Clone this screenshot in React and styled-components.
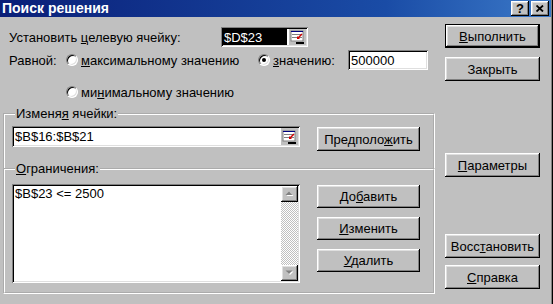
import React from "react"
import styled, { createGlobalStyle, css } from "styled-components"

const GlobalStyle = createGlobalStyle`
  html, body {
    margin: 0;
    padding: 0;
    background: #c0c0c0;
  }
  body {
    font-family: "Liberation Sans", Arial, sans-serif;
    font-size: 13px;
    color: #000;
  }
`

const raised = css`
  box-shadow: inset -1px -1px #000, inset 1px 1px #fff, inset -2px -2px #808080,
    inset 2px 2px #dfdfdf;
`

const sunken = css`
  box-shadow: inset 1px 1px #808080, inset -1px -1px #fff, inset 2px 2px #000,
    inset -2px -2px #dfdfdf;
`

const Window = styled.div`
  width: 553px;
  height: 304px;
  box-sizing: border-box;
  background: #c0c0c0;
  box-shadow: inset -1px 0 #000, inset -2px 0 #808080;
  overflow: hidden;
`

const TitleBar = styled.div`
  width: 551px;
  height: 17px;
  box-sizing: border-box;
  padding: 0 2px 0 2px;
  display: flex;
  align-items: center;
  background: linear-gradient(90deg, #0a1f78 0%, #1a4ca6 70%, #3b79c8 100%);
`

const Title = styled.div`
  flex: 1;
  color: #fff;
  font-weight: bold;
  font-size: 14px;
  line-height: 17px;
  white-space: nowrap;
`

const CaptionButton = styled.div`
  width: 18px;
  height: 15px;
  box-sizing: border-box;
  margin-left: ${p => p.$gap || 0}px;
  background: #c0c0c0;
  ${raised};
  display: flex;
  align-items: center;
  justify-content: center;
  font-weight: bold;
  font-size: 13px;
  line-height: 13px;
`

const Body = styled.div`
  display: flex;
`

const LeftCol = styled.div`
  width: 436px;
  display: flex;
  flex-direction: column;
`

const RightCol = styled.div`
  width: 95px;
  margin-left: 9px;
  display: flex;
  flex-direction: column;
`

const Row = styled.div`
  display: flex;
  align-items: center;
  height: ${p => p.$h || 20}px;
  margin-top: ${p => p.$top || 0}px;
  padding-left: ${p => p.$indent || 9}px;
`

const Label = styled.div`
  width: ${p => (p.$w ? `${p.$w}px` : "auto")};
  white-space: nowrap;
  flex-shrink: 0;
`

const Field = styled.div`
  box-sizing: border-box;
  width: ${p => p.$w}px;
  height: ${p => p.$h}px;
  padding: 2px;
  background: #fff;
  ${sunken};
  display: flex;
  align-items: center;
  flex-shrink: 0;
`

const FieldText = styled.div`
  flex: 1;
  height: 100%;
  display: flex;
  align-items: center;
  padding-left: 1px;
  white-space: nowrap;
  ${p =>
    p.$selected &&
    css`
      background: #000;
      color: #fff;
    `}
`

const RefIcon = styled.div`
  width: 17px;
  height: 100%;
  margin-left: 2px;
  display: flex;
  align-items: center;
  justify-content: center;
  background: #c0c0c0;
`

const RadioOption = styled.label`
  display: flex;
  align-items: center;
  width: ${p => (p.$w ? `${p.$w}px` : "auto")};
  flex-shrink: 0;
  white-space: nowrap;
`

const RadioCircle = styled.span`
  width: 12px;
  height: 12px;
  box-sizing: border-box;
  border-radius: 50%;
  background: #fff;
  border: 1px solid;
  border-color: #808080 #fff #fff #808080;
  box-shadow: inset 1px 1px #000, inset -1px -1px #dfdfdf;
  margin-right: 3px;
  display: flex;
  align-items: center;
  justify-content: center;

  &::after {
    content: "";
    width: 4px;
    height: 4px;
    border-radius: 50%;
    background: ${p => (p.$checked ? "#000" : "transparent")};
  }
`

const Group = styled.fieldset`
  box-sizing: border-box;
  width: 432px;
  margin: ${p => p.$top || 0}px 0 0 3px;
  padding: ${p => p.$pad};
  border: 2px groove #ffffff;
  ${p =>
    p.$open &&
    css`
      border-bottom: none;
    `}
  min-width: 0;
`

const Legend = styled.legend`
  margin-left: 3px;
  padding: 0 1px;
  line-height: 15px;
  white-space: nowrap;
`

const GroupRow = styled.div`
  display: flex;
  align-items: flex-start;
`

const ButtonStack = styled.div`
  display: flex;
  flex-direction: column;
  gap: 9px;
  margin-left: 17px;
  margin-top: ${p => p.$top || 0}px;
`

const Button = styled.button`
  box-sizing: border-box;
  width: ${p => p.$w || 95}px;
  height: ${p => p.$h || 24}px;
  margin-top: ${p => p.$top || 0}px;
  padding: 0;
  border: none;
  background: #c0c0c0;
  font-family: "Liberation Sans", Arial, sans-serif;
  font-size: 13px;
  color: #000;
  ${raised};
  ${p =>
    p.$default &&
    css`
      box-shadow: inset 0 0 0 1px #000, inset -2px -2px #000, inset 2px 2px #fff,
        inset -3px -3px #808080, inset 3px 3px #dfdfdf;
    `}
`

const ListBox = styled.div`
  box-sizing: border-box;
  width: 288px;
  height: 99px;
  padding: 2px;
  background: #fff;
  ${sunken};
  display: flex;
  flex-shrink: 0;
`

const ListItems = styled.div`
  flex: 1;
  padding-left: 1px;
  line-height: 15px;
`

const ScrollBar = styled.div`
  width: 17px;
  display: flex;
  flex-direction: column;
`

const ScrollButton = styled.div`
  height: 16px;
  background: #c0c0c0;
  ${raised};
  display: flex;
  align-items: center;
  justify-content: center;
`

const ScrollTrack = styled.div`
  flex: 1;
  background: repeating-conic-gradient(#c0c0c0 0% 25%, #ffffff 0% 50%) 0 0 / 2px 2px;
`

const CellRefGlyph = () => (
  <svg width="15" height="14" viewBox="0 0 15 14">
    <rect x="1" y="1" width="12" height="10" fill="#fff" stroke="#808080" />
    <line x1="1" y1="1.5" x2="13" y2="1.5" stroke="#000080" />
    <line x1="2" y1="4.5" x2="12" y2="4.5" stroke="#808080" />
    <line x1="2" y1="7.5" x2="12" y2="7.5" stroke="#808080" />
    <path d="M12 4 L8 8" stroke="#d00000" strokeWidth="1.5" />
    <path d="M7 6 L7 9 L10 9 Z" fill="#d00000" />
    <rect x="6" y="12" width="8" height="2" fill="#000" />
  </svg>
)

const Arrow = ({ down }) => (
  <svg width="9" height="6" viewBox="0 0 9 6">
    {down ? (
      <>
        <path d="M1.5 1.5 L8.5 1.5 L5 5 Z" fill="#fff" />
        <path d="M0.5 0.5 L7.5 0.5 L4 4 Z" fill="#808080" />
      </>
    ) : (
      <>
        <path d="M5 1.5 L8.5 5 L1.5 5 Z" fill="#fff" />
        <path d="M4 0.5 L7.5 4 L0.5 4 Z" fill="#808080" />
      </>
    )}
  </svg>
)

const CloseGlyph = () => (
  <svg width="8" height="7" viewBox="0 0 8 7">
    <path d="M0.5 0.5 L7 6.5 M7 0.5 L0.5 6.5" stroke="#000" strokeWidth="1.8" />
  </svg>
)

const App = () => (
  <Window>
    <GlobalStyle />
    <TitleBar>
      <Title>Поиск решения</Title>
      <CaptionButton>?</CaptionButton>
      <CaptionButton $gap={2}>
        <CloseGlyph />
      </CaptionButton>
    </TitleBar>
    <Body>
      <LeftCol>
        <Row $top={10}>
          <Label $w={212}>
            Установить <u>ц</u>елевую ячейку:
          </Label>
          <Field $w={87} $h={20}>
            <FieldText $selected>$D$23</FieldText>
            <RefIcon>
              <CellRefGlyph />
            </RefIcon>
          </Field>
        </Row>
        <Row $top={3}>
          <Label $w={57}>Равной:</Label>
          <RadioOption $w={192}>
            <RadioCircle />
            <span>
              <u>м</u>аксимальному значению
            </span>
          </RadioOption>
          <RadioOption $w={90}>
            <RadioCircle $checked />
            <span>
              <u>з</u>начению:
            </span>
          </RadioOption>
          <Field $w={80} $h={20}>
            <FieldText>500000</FieldText>
          </Field>
        </Row>
        <Row $top={14} $h={16} $indent={66}>
          <RadioOption>
            <RadioCircle />
            <span>
              ми<u>н</u>имальному значению
            </span>
          </RadioOption>
        </Row>
        <Group $top={6} $open $pad="5px 0 17px 7px">
          <Legend>
            Изменя<u>я</u> ячейки:
          </Legend>
          <GroupRow>
            <Field $w={288} $h={21}>
              <FieldText>$B$16:$B$21</FieldText>
              <RefIcon>
                <CellRefGlyph />
              </RefIcon>
            </Field>
            <ButtonStack $top={1}>
              <Button $w={103}>
                Предполо<u>ж</u>ить
              </Button>
            </ButtonStack>
          </GroupRow>
        </Group>
        <Group $top={-7} $pad="8px 0 9px 7px">
          <Legend>
            <u>О</u>граничения:
          </Legend>
          <GroupRow>
            <ListBox>
              <ListItems>$B$23 &lt;= 2500</ListItems>
              <ScrollBar>
                <ScrollButton>
                  <Arrow />
                </ScrollButton>
                <ScrollTrack />
                <ScrollButton>
                  <Arrow down />
                </ScrollButton>
              </ScrollBar>
            </ListBox>
            <ButtonStack $top={1}>
              <Button $w={103} $h={23}>
                До<u>б</u>авить
              </Button>
              <Button $w={103} $h={23}>
                <u>И</u>зменить
              </Button>
              <Button $w={103} $h={23}>
                <u>У</u>далить
              </Button>
            </ButtonStack>
          </GroupRow>
        </Group>
      </LeftCol>
      <RightCol>
        <Button $default $top={7}>
          <u>В</u>ыполнить
        </Button>
        <Button $top={9}>Закрыть</Button>
        <Button $top={72}>
          <u>П</u>араметры
        </Button>
        <Button $top={57}>
          Восс<u>т</u>ановить
        </Button>
        <Button $top={7}>
          <u>С</u>правка
        </Button>
      </RightCol>
    </Body>
  </Window>
)

export default App
